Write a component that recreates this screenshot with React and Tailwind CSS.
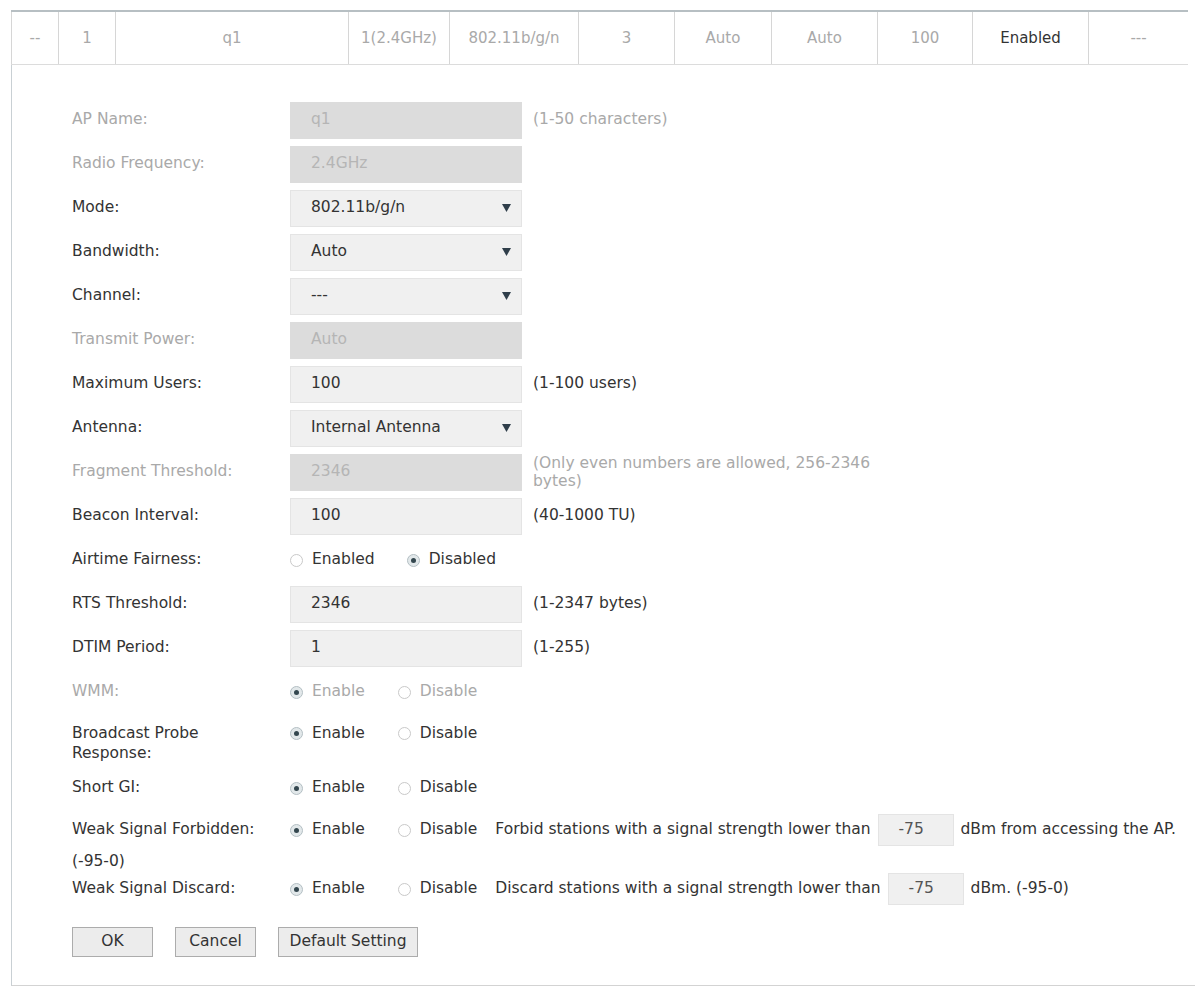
import React from "react";

const cols = [
  { w: "w-[47px]", text: "--", dark: false },
  { w: "w-[57px]", text: "1", dark: false },
  { w: "w-[233px]", text: "q1", dark: false },
  { w: "w-[101px]", text: "1(2.4GHz)", dark: false },
  { w: "w-[129px]", text: "802.11b/g/n", dark: false },
  { w: "w-[96px]", text: "3", dark: false },
  { w: "w-[97px]", text: "Auto", dark: false },
  { w: "w-[106px]", text: "Auto", dark: false },
  { w: "w-[95px]", text: "100", dark: false },
  { w: "w-[116px]", text: "Enabled", dark: true },
  { w: "w-[100px]", text: "---", dark: false },
];

const Row = ({ label, disabled, children, hint, hintGray, h = "h-[44px]" }) => (
  <div className={`flex items-center ${h}`}>
    <div className={`w-[218px] shrink-0 ${disabled ? "text-[#a9a9a9]" : "text-[#333]"}`}>{label}</div>
    {children}
    {hint && (
      <div className={`ml-[11px] ${hintGray ? "text-[#a9a9a9]" : "text-[#333]"}`}>{hint}</div>
    )}
  </div>
);

const TextBox = ({ value, disabled }) => (
  <div
    className={`w-[232px] h-[37px] flex items-center pl-[20px] border ${
      disabled
        ? "bg-[#dcdcdc] border-[#dcdcdc] text-[#b5b5b5]"
        : "bg-[#f0f0f0] border-[#e4e4e4] text-[#333]"
    }`}
  >
    {value}
  </div>
);

const Select = ({ value }) => (
  <div className="w-[232px] h-[37px] flex items-center justify-between pl-[20px] pr-[10px] bg-[#f0f0f0] border border-[#e4e4e4] text-[#333]">
    <span>{value}</span>
    <svg width="9" height="8" viewBox="0 0 9 8">
      <path d="M0 0h9L4.5 8z" fill="#2f3e4a" />
    </svg>
  </div>
);

const Radio = ({ checked, label, disabled, gap = "mr-[33px]" }) => (
  <span className={`inline-flex items-center ${gap}`}>
    <span
      className={`w-[13px] h-[13px] rounded-full border flex items-center justify-center ${
        checked ? "border-[#b4bfc4] bg-[#e2e8ea]" : "border-[#c9c9c9] bg-white"
      }`}
    >
      {checked && <span className="w-[5px] h-[5px] rounded-full bg-[#34474f]" />}
    </span>
    <span className={`ml-[9px] ${disabled ? "text-[#a9a9a9]" : "text-[#333]"}`}>{label}</span>
  </span>
);

const SmallBox = ({ value }) => (
  <span className="inline-flex items-center w-[76px] h-[32px] pl-[20px] mx-[7px] bg-[#f0f0f0] border border-[#e4e4e4] text-[#555]">
    {value}
  </span>
);

const Button = ({ children, w }) => (
  <button className={`${w} h-[30px] bg-[#ececec] border border-[#acacac] text-[#333] flex items-center justify-center`}>
    {children}
  </button>
);

export default function App() {
  return (
    <div className="w-[1195px] h-[990px] bg-white pt-[10px] text-[15.5px] text-[#333] font-['DejaVu_Sans',sans-serif] overflow-hidden">
      {/* list row */}
      <div className="ml-[11px] w-[1177px] h-[55px] flex border-t-2 border-t-[#b7bfc3] border-b border-b-[#dcdcdc] text-[15px]">
        {cols.map((c, i) => (
          <div
            key={i}
            className={`${c.w} flex items-center justify-center border-l border-[#d6d6d6] ${
              c.dark ? "text-[#333]" : "text-[#a9a9a9]"
            }`}
          >
            {c.text}
          </div>
        ))}
      </div>

      {/* edit panel */}
      <div className="ml-[11px] border-l border-l-[#c9d0d4] border-b border-b-[#d3d3d3] pt-[33px] pl-[60px] pb-[28px]">
        <Row label="AP Name:" disabled hint="(1-50 characters)" hintGray>
          <TextBox value="q1" disabled />
        </Row>
        <Row label="Radio Frequency:" disabled>
          <TextBox value="2.4GHz" disabled />
        </Row>
        <Row label="Mode:">
          <Select value="802.11b/g/n" />
        </Row>
        <Row label="Bandwidth:">
          <Select value="Auto" />
        </Row>
        <Row label="Channel:">
          <Select value="---" />
        </Row>
        <Row label="Transmit Power:" disabled>
          <TextBox value="Auto" disabled />
        </Row>
        <Row label="Maximum Users:" hint="(1-100 users)">
          <TextBox value="100" />
        </Row>
        <Row label="Antenna:">
          <Select value="Internal Antenna" />
        </Row>
        <Row label="Fragment Threshold:" disabled>
          <TextBox value="2346" disabled />
          <div className="ml-[11px] w-[355px] text-[#a9a9a9] leading-[18px]">
            (Only even numbers are allowed, 256-2346 bytes)
          </div>
        </Row>
        <Row label="Beacon Interval:" hint="(40-1000 TU)">
          <TextBox value="100" />
        </Row>
        <Row label="Airtime Fairness:">
          <Radio label="Enabled" gap="mr-[32px]" />
          <Radio checked label="Disabled" />
        </Row>
        <Row label="RTS Threshold:" hint="(1-2347 bytes)">
          <TextBox value="2346" />
        </Row>
        <Row label="DTIM Period:" hint="(1-255)">
          <TextBox value="1" />
        </Row>
        <Row label="WMM:" disabled>
          <Radio checked disabled label="Enable" />
          <Radio disabled label="Disable" />
        </Row>
        <div className="flex items-start h-[52px] pt-[9px] leading-[20px]">
          <div className="w-[218px] shrink-0 text-[#333]">
            Broadcast Probe
            <br />
            Response:
          </div>
          <Radio checked label="Enable" />
          <Radio label="Disable" />
        </div>
        <Row label="Short GI:">
          <Radio checked label="Enable" />
          <Radio label="Disable" />
        </Row>
        <Row label="Weak Signal Forbidden:" h="h-[40px]">
          <Radio checked label="Enable" />
          <Radio label="Disable" gap="mr-[18px]" />
          <span className="whitespace-nowrap">Forbid stations with a signal strength lower than</span>
          <SmallBox value="-75" />
          <span className="whitespace-nowrap">dBm from accessing the AP.</span>
        </Row>
        <div className="h-[24px] flex items-center">(-95-0)</div>
        <Row label="Weak Signal Discard:" h="h-[30px]">
          <Radio checked label="Enable" />
          <Radio label="Disable" gap="mr-[18px]" />
          <span className="whitespace-nowrap">Discard stations with a signal strength lower than</span>
          <SmallBox value="-75" />
          <span className="whitespace-nowrap">dBm. (-95-0)</span>
        </Row>

        <div className="flex gap-[22px] mt-[23px]">
          <Button w="w-[81px]">OK</Button>
          <Button w="w-[81px]">Cancel</Button>
          <Button w="w-[140px]">Default Setting</Button>
        </div>
      </div>
    </div>
  );
}
